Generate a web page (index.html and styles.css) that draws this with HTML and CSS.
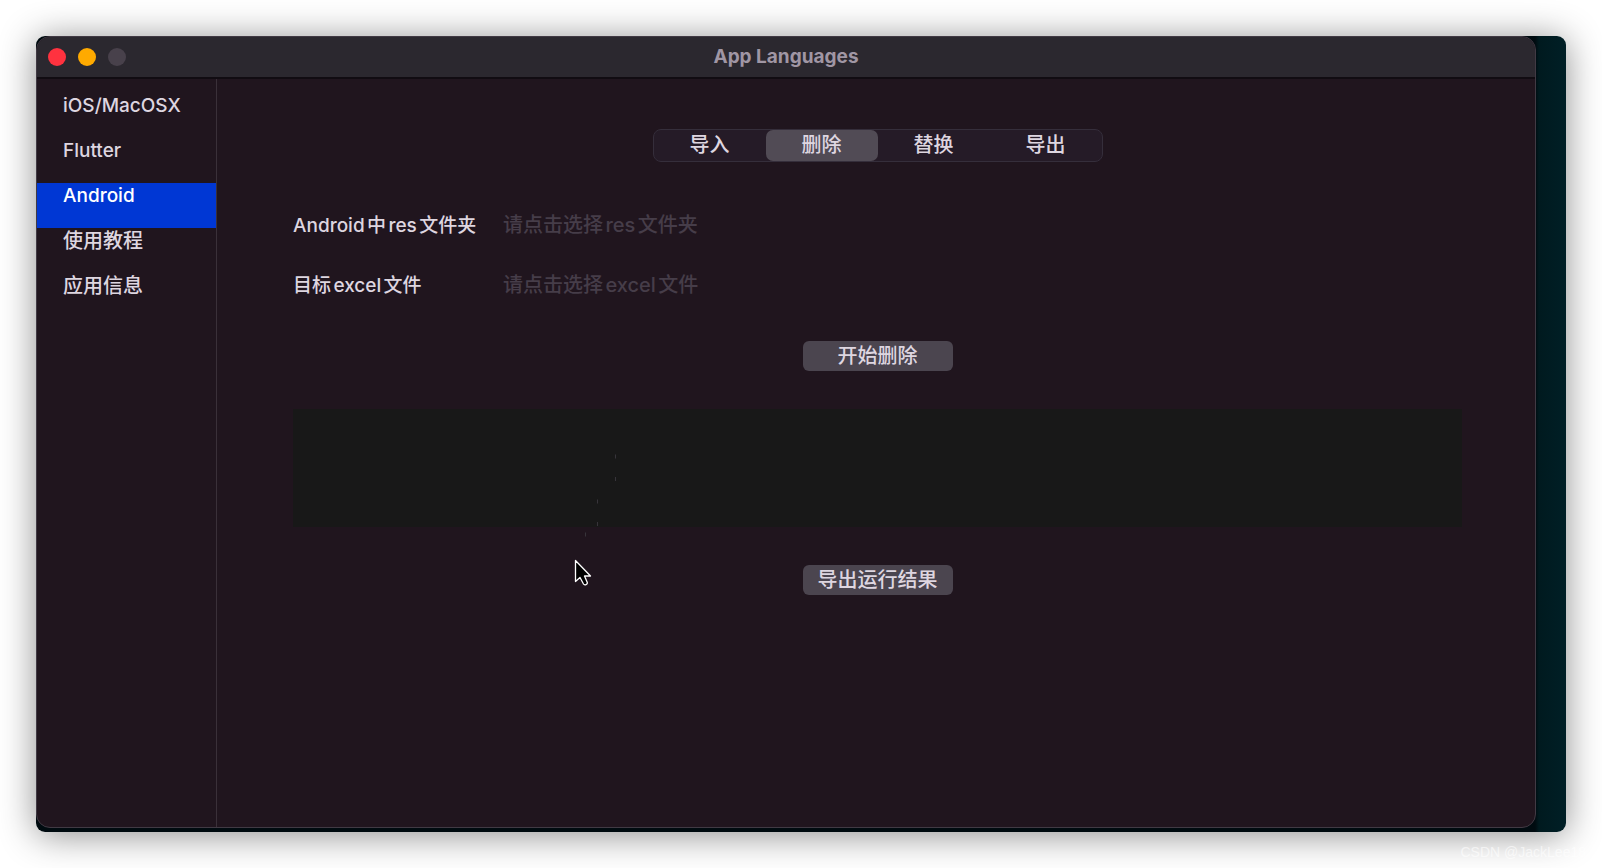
FILE: index.html
```html
<!DOCTYPE html>
<html lang="zh-CN">
<head>
  <meta charset="UTF-8" />
  <meta name="viewport" content="width=device-width, initial-scale=1.0"/>
  <title>App Languages</title>
  <link rel="stylesheet" href="styles.css">
</head>
<body>
  <div class="desktop">
    <div class="window">
      <!-- Title bar -->
      <header class="titlebar">
        <div class="lights">
          <button class="light close" type="button" aria-label="关闭"></button>
          <button class="light minimize" type="button" aria-label="最小化"></button>
          <button class="light zoom" type="button" aria-label="缩放" disabled></button>
        </div>
        <h1>App Languages</h1>
      </header>

      <div class="body">
        <!-- Sidebar -->
        <nav class="sidebar">
          <a href="#ios">iOS/MacOSX</a>
          <a href="#flutter">Flutter</a>
          <a href="#android" class="active">Android</a>
          <a href="#guide" class="zh">使用教程</a>
          <a href="#about" class="zh">应用信息</a>
        </nav>

        <!-- Main Section -->
        <main class="content">
          <div class="segments" role="radiogroup">
            <label><input type="radio" name="action"><span>导入</span></label>
            <label><input type="radio" name="action" checked><span>删除</span></label>
            <label><input type="radio" name="action"><span>替换</span></label>
            <label><input type="radio" name="action"><span>导出</span></label>
          </div>

          <form class="fields">
            <label for="resFolder">Android中res文件夹</label>
            <input type="text" id="resFolder" placeholder="请点击选择res文件夹" readonly>
            <label for="excelFile">目标excel文件</label>
            <input type="text" id="excelFile" placeholder="请点击选择excel文件" readonly>
          </form>

          <button class="btn" type="button">开始删除</button>
          <textarea class="log" aria-label="运行结果" readonly></textarea>
          <button class="btn" type="button">导出运行结果</button>
        </main>
      </div>
    </div>

    <!-- Mouse pointer and its trail -->
    <svg class="pointer" width="52" height="136" viewBox="0 0 52 136" aria-hidden="true">
      <path d="M45.500 4.500v4M45.500 27v4M27.500 49.500v4M27.500 72v4M15.500 82.500v4" stroke="#37343a" stroke-width="1"/>
      <path d="M5.500 110.500v21l4.500-4 3.500 6.500c1 1.600 4.500.4 3.700-1.700L14.500 126h6z" fill="#000" stroke="#fff" stroke-width="1.300" stroke-linejoin="round"/>
    </svg>
  </div>
  <div class="watermark">CSDN @JackLee18</div>
</body>
</html>
```
FILE: styles.css
```css
:root {
  --bg: #20151e;
  --bar: #2b282f;
  --line: #3a3039;
  --text: #ded6e0;
  --muted: #463d49;
  --button: #4b454f;
  --primary: #0037d4;
}
* {
  box-sizing: border-box;
}
body {
  margin: 0;
  padding: 36px;
  min-height: 100vh;
  display: flex;
  background: #fff;
  color: var(--text);
  font-family: Inter, "Noto Sans CJK SC", sans-serif;
  font-size: 19px;
  font-weight: 500;
  line-height: 24px;
  text-autospace: normal;
}
.desktop {
  position: relative;
  flex: 1;
  display: flex;
  padding: 0 30px 4px 0;
  border-radius: 9px;
  background: linear-gradient(to left, #001f26, #001a1f 27px, #000b10 31px);
  box-shadow: 0 3px 36px rgba(0,0,0,0.45);
}
.window {
  flex: 1;
  display: flex;
  flex-direction: column;
  border: 1px solid #413a44;
  border-radius: 14px;
  background: var(--bg);
  overflow: hidden;
}
.titlebar {
  position: relative;
  height: 42px;
  display: flex;
  align-items: center;
  justify-content: center;
  background: var(--bar);
  border-bottom: 2px solid #110c12;
}
.titlebar h1 {
  margin: 0;
  font-size: 19px;
  font-weight: 700;
  color: #a096a4;
}
.lights {
  position: absolute;
  left: 11px;
  display: flex;
  gap: 12px;
}
.light {
  width: 18px;
  height: 18px;
  padding: 0;
  border: none;
  border-radius: 50%;
}
.close {
  background: #ff323f;
}
.minimize {
  background: #ffaa00;
}
.zoom {
  background: #48414b;
}
.body {
  flex: 1;
  display: flex;
}
.sidebar {
  width: 180px;
  padding-top: 14px;
  border-right: 1px solid var(--line);
}
.sidebar a {
  display: block;
  height: 45px;
  padding-left: 26px;
  line-height: 26px;
  color: var(--text);
  text-decoration: none;
}
.sidebar .active {
  background: var(--primary);
  color: #fff;
}
.sidebar .zh {
  font-size: 20px;
}
.content {
  flex: 1;
  display: flex;
  flex-direction: column;
  align-items: center;
  padding: 50px 73px 0 76px;
}
.segments {
  display: flex;
  height: 33px;
  border: 1px solid #352e3b;
  border-radius: 8px;
  background: #251b27;
  font-size: 20px;
}
.segments label {
  width: 112px;
  display: flex;
}
.segments input {
  position: absolute;
  opacity: 0;
}
.segments span {
  flex: 1;
  border-radius: 7px;
  line-height: 31px;
  text-align: center;
}
.segments input:checked + span {
  background: #514b55;
}
.fields {
  align-self: stretch;
  display: grid;
  grid-template-columns: 200px 1fr;
  gap: 30px 8px;
  margin: 48px 0 41px;
}
.fields label {
  line-height: 32px;
}
.fields input {
  height: 30px;
  padding: 0 2px;
  border: none;
  background: transparent;
  color: var(--text);
  font: inherit;
  font-size: 20px;
}
.fields label,
.fields input {
  height: 30px;
}
.fields input::placeholder {
  color: var(--muted);
}
.btn {
  width: 150px;
  height: 30px;
  padding: 0;
  border: none;
  border-radius: 6px;
  background: var(--button);
  color: var(--text);
  font: inherit;
  font-size: 20px;
}
.log {
  align-self: stretch;
  height: 118px;
  margin: 38px 0;
  border: none;
  background: #181818;
  color: var(--text);
  font: inherit;
  resize: none;
}
.pointer {
  position: absolute;
  left: 534px;
  top: 414px;
}
.watermark {
  position: absolute;
  right: 16px;
  bottom: 7px;
  color: rgba(255,255,255,0.6);
  font-family: "Liberation Sans", sans-serif;
  font-size: 14px;
  font-weight: 400;
  line-height: 18px;
}
```
